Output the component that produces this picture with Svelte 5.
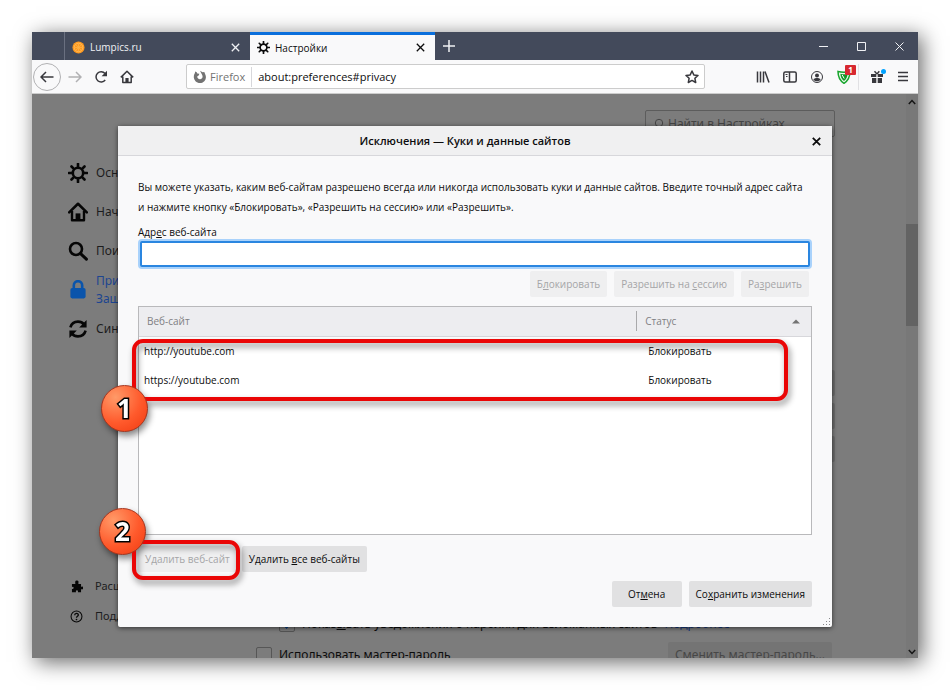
<script lang="ts">
  type Site = { url: string; status: string };

  let address = $state("");
  let sites = $state<Site[]>([
    { url: "http://youtube.com", status: "Блокировать" },
    { url: "https://youtube.com", status: "Блокировать" },
  ]);

  const categories = [
    { icon: "gear", label: "Основные" },
    { icon: "home", label: "Начало" },
    { icon: "search", label: "Поиск" },
    { icon: "lock", label: "Приватность и Защита", active: true },
    { icon: "sync", label: "Синхронизация" },
  ];
</script>

{#snippet icon(name: string)}
  <svg class="icon" viewBox="0 0 20 20" fill="none" stroke="currentColor" stroke-width="2" aria-hidden="true">
    {#if name === "gear"}
      <circle cx="10" cy="10" r="5.2" stroke-width="2.6" />
      <path
        d="M10 .8v3.4M10 15.8v3.4M.8 10h3.4M15.8 10h3.4M3.5 3.5l2.4 2.4M14.1 14.1l2.4 2.4M3.5 16.5l2.4-2.4M14.1 5.9l2.4-2.4"
        stroke-width="2.6"
        stroke-linecap="round"
      />
    {:else if name === "home"}
      <path d="M1.2 10.4L10 1.8l8.8 8.6" stroke-width="2.6" stroke-linecap="round" stroke-linejoin="round" />
      <path d="M4 9v9.2h12V9" stroke-width="2.4" stroke-linejoin="round" />
      <path d="M7.6 18v-6.6h4.8V18z" fill="currentColor" stroke="none" />
    {:else if name === "search"}
      <circle cx="8" cy="8" r="6" stroke-width="2.6" />
      <path d="M12.6 12.6l5.8 5.6" stroke-width="3" stroke-linecap="round" />
    {:else if name === "lock"}
      <rect x="2.4" y="8" width="15.2" height="10.4" rx="1.8" fill="currentColor" stroke="none" />
      <path d="M5.8 8.6V5.4a4.2 4.2 0 0 1 8.4 0v3.2" stroke-width="2.6" />
    {:else if name === "sync"}
      <path d="M2.4 8.4C3.4 4.6 6.4 2.6 10 2.6c2.6 0 4.6 1 6 2.8M17.6 11.6c-1 3.8-4 5.8-7.6 5.8-2.6 0-4.6-1-6-2.8" stroke-width="2.6" />
      <path d="M18.6 1v7.4h-7.4zM1.4 19v-7.4h7.4z" fill="currentColor" stroke="none" />
    {:else if name === "addon"}
      <path
        d="M8 2.5a2.6 2.6 0 0 1 5 1.5c-.3.9-.3 1.5.2 2H17v4c.6.7 1.4.2 1.8 0a1.8 1.8 0 0 1 0 4.4c-.7-.3-1.3-.6-1.8.2V19h-4.6c-.6-.7.2-1.5 0-2.2-.5-1.4-3-1.4-3.4 0-.2.7.6 1.5 0 2.2H3v-5c.5-.6 1.2-.1 2-.4 1-.5 1-2.5 0-3-.8-.3-1.5.3-2-.3V6h5c.6-.8-.4-2.4 0-3.5z"
        fill="currentColor"
        stroke="none"
      />
    {:else if name === "help"}
      <circle cx="10" cy="10" r="8.4" stroke-width="1.6" />
      <path d="M7.2 8c0-3.8 5.6-3.6 5.6-.4 0 2-2.8 2-2.8 4.2" />
      <circle cx="10" cy="14.6" r="1.3" fill="currentColor" stroke="none" />
    {/if}
  </svg>
{/snippet}

<div class="page">
  <div class="browser">
    <header class="tabs">
      <div class="tab">
        <svg class="tab-icon" viewBox="0 0 14 14">
          <circle cx="7" cy="7" r="6.5" fill="#ff9a1f" stroke="none" />
          <circle cx="7" cy="7" r="4.6" fill="none" stroke="#ffb95a" stroke-width="1" />
          <path d="M7 3v8M3 7h8M4.2 4.2l5.6 5.6M9.8 4.2l-5.6 5.6" stroke="#ffb347" stroke-width=".8" />
        </svg>
        <span class="tab-title">Lumpics.ru</span>
        <button class="tab-close" aria-label="Закрыть вкладку">
          <svg width="9" height="9" viewBox="0 0 9 9"><path d="M.8.8l7.4 7.4M8.2.8L.8 8.2" /></svg>
        </button>
      </div>
      <div class="tab active">
        <span class="tab-icon">{@render icon("gear")}</span>
        <span class="tab-title">Настройки</span>
        <button class="tab-close" aria-label="Закрыть вкладку">
          <svg width="9" height="9" viewBox="0 0 9 9"><path d="M.8.8l7.4 7.4M8.2.8L.8 8.2" /></svg>
        </button>
      </div>
      <button class="new-tab" aria-label="Новая вкладка">
        <svg width="12" height="12" viewBox="0 0 12 12"><path d="M6 0v12M0 6h12" /></svg>
      </button>
      <div class="window-controls">
        <button aria-label="Свернуть"><svg width="9" height="9" viewBox="0 0 9 9"><path d="M0 4.5h9" /></svg></button>
        <button aria-label="Развернуть"><svg width="9" height="9" viewBox="0 0 9 9"><path d="M.5.5h8v8h-8z" /></svg></button>
        <button aria-label="Закрыть"><svg width="9" height="9" viewBox="0 0 9 9"><path d="M.5.5l8 8M8.5.5l-8 8" /></svg></button>
      </div>
    </header>

    <nav class="toolbar">
      <button class="tool back" aria-label="Назад">
        <svg width="14" height="12" viewBox="0 0 14 12"><path d="M13.5 6H1M6 1L1 6l5 5" /></svg>
      </button>
      <button class="tool" aria-label="Вперёд" disabled>
        <svg width="14" height="12" viewBox="0 0 14 12"><path d="M.5 6H13M8 1l5 5-5 5" /></svg>
      </button>
      <button class="tool" aria-label="Обновить">
        <svg width="14" height="14" viewBox="0 0 14 14">
          <path d="M11.2 10A5.1 5.1 0 1 1 11 3.6" />
          <path d="M13 .8v5.4H7.6z" class="solid" />
        </svg>
      </button>
      <button class="tool" aria-label="Домой">
        <svg width="14" height="14" viewBox="0 0 14 14">
          <path d="M.8 7.4L7 1.3l6.2 6.1M2.8 6.6v6h8.4v-6" stroke-linejoin="round" />
          <path d="M5.4 12.6V8h3.2v4.6z" class="solid" />
        </svg>
      </button>

      <div class="urlbar">
        <svg width="14" height="14" viewBox="0 0 14 14">
          <path
            d="M7 .8l2.6 1.5 1.7-.2.8 1.9c1.4 2.6 1 5.3-.8 7.2-2.5 2.5-6.5 2.4-8.8 0C.4 9 .2 5.6 1.9 3l.3-1.6 1.5.9.6 1.2 2 .3-.4 1.4-1.7 1.2c.2 2.2 2 3.2 3.6 2.6 1.7-.6 2.2-2.2 1.5-3.8z"
            class="solid grey"
          />
        </svg>
        <span class="identity">Firefox</span>
        <input class="url" aria-label="Адрес" value="about:preferences#privacy" />
        <button class="star" aria-label="Добавить в закладки">
          <svg width="14" height="14" viewBox="0 0 14 14">
            <path d="M7 1l1.8 3.9 4.2.5-3.1 2.9.8 4.2L7 10.4l-3.7 2.1.8-4.2L1 5.4l4.2-.5z" stroke-linejoin="round" />
          </svg>
        </button>
      </div>

      <div class="tools">
        <button class="tool" aria-label="Библиотека">
          <svg width="14" height="14" viewBox="0 0 14 14"><path d="M1.5 1.5v11M4.5 1.5v11M7.5 1.5v11M9 1.5l4 11" /></svg>
        </button>
        <button class="tool" aria-label="Боковые панели">
          <svg width="14" height="14" viewBox="0 0 14 14">
            <rect x=".8" y="2" width="12.4" height="10" rx="1.5" />
            <path d="M6.5 2v10" />
            <path d="M2.5 4.5h2M3 6.5h1.5" stroke-width="1" />
          </svg>
        </button>
        <button class="tool" aria-label="Аккаунт">
          <svg class="thin" width="14" height="14" viewBox="0 0 14 14">
            <circle cx="7" cy="7" r="5.5" />
            <circle cx="7" cy="5.4" r="2" class="solid" />
            <path d="M3.4 9.4c1-2 6.2-2 7.2 0-1 2.4-6.2 2.4-7.2 0z" class="solid" />
          </svg>
        </button>
        <button class="tool" aria-label="Защита, 1 уведомление">
          <svg width="14" height="14" viewBox="0 0 14 14">
            <path d="M1 1.5c4 1 8 1 12 0 0 5-1.5 9-6 11.8C2.5 10.5 1 6.5 1 1.5z" fill="#e9f7ea" stroke="#17a52c" />
            <path d="M3.4 3.8c2.4.7 4.8.7 7.2 0 0 3-1.2 5.3-3.6 7.2-2.4-1.9-3.6-4.2-3.6-7.2z" fill="#129a28" stroke="none" />
            <path d="M5.2 5l2 3.5" stroke="#fff" stroke-width="1" />
          </svg>
          <span class="badge">1</span>
        </button>
        <button class="tool gift" aria-label="Что нового">
          <svg width="14" height="14" viewBox="0 0 14 14">
            <path d="M1 4h5.3v3H1zM7.7 4H13v3H7.7zM2 8h4.3v5H2zM7.7 8H12v5H7.7z" class="solid" />
            <path d="M7 4L4.5 1.3M7 4l2.3-2.7" />
          </svg>
          <span class="dot"></span>
        </button>
        <button class="tool" aria-label="Меню">
          <svg width="12" height="12" viewBox="0 0 12 12"><path d="M1 1.5h10M1 5.5h10M1 9.5h10" /></svg>
        </button>
      </div>
    </nav>

    <div class="content">
      <aside class="sidebar">
        {#each categories as c}
          <a class="category" class:selected={c.active} href="#{c.icon}">
            {@render icon(c.icon)}
            <span>{c.label}</span>
          </a>
        {/each}
        <div class="links">
          <a class="small-link" href="#addons">{@render icon("addon")}<span>Расширения и темы</span></a>
          <a class="small-link" href="#support">{@render icon("help")}<span>Поддержка Firefox</span></a>
        </div>
      </aside>

      <main class="prefs">
        <label class="find">
          <svg width="12" height="12" viewBox="0 0 12 12"><circle cx="7" cy="5" r="3.7" /><path d="M4.3 7.7L1 11" /></svg>
          <input placeholder="Найти в Настройках" />
        </label>
        <div class="side-buttons">
          <button>Исключения…</button>
          <button>Сохранённые логины…</button>
          <button>Управление данными…</button>
        </div>
        <div class="pref-rows">
          <div class="pref-row nested">
            <input id="breach" type="checkbox" checked />
            <label for="breach">Показ<u>ы</u>вать уведомления о паролях для взломанных сайтов</label>
            <a href="#more">Подробнее</a>
          </div>
          <div class="pref-row">
            <input id="master" type="checkbox" />
            <label for="master">Использовать мастер-пароль</label>
            <button disabled>Сменить мастер-пароль…</button>
          </div>
        </div>
      </main>

      <div class="scrollbar" aria-hidden="true">
        <svg width="8" height="6" viewBox="0 0 8 6"><path d="M.8 5L4 1.5 7.2 5" /></svg>
        <div class="track"><span class="thumb"></span></div>
        <svg width="8" height="6" viewBox="0 0 8 6"><path d="M.8 1L4 4.5 7.2 1" /></svg>
      </div>

      <div class="overlay">
        <div class="dialog" role="dialog" aria-labelledby="dialog-title">
          <div class="dialog-header">
            <h1 id="dialog-title">Исключения — Куки и данные сайтов</h1>
            <button class="dialog-close" aria-label="Закрыть">
              <svg width="9" height="9" viewBox="0 0 9 9"><path d="M.8.8l7.4 7.4M8.2.8L.8 8.2" /></svg>
            </button>
          </div>

          <div class="dialog-body">
            <p>
              Вы можете указать, каким веб-сайтам разрешено всегда или никогда использовать куки и данные сайтов. Введите
              точный адрес сайта и нажмите кнопку «Блокировать», «Разрешить на сессию» или «Разрешить».
            </p>
            <label class="address-label" for="address">Адр<u>е</u>с веб-сайта</label>
            <input id="address" class="address" bind:value={address} />
            <div class="actions">
              <button disabled={!address}>Б<u>л</u>окировать</button>
              <button disabled={!address}>Разрешить на <u>с</u>ессию</button>
              <button disabled={!address}>Ра<u>з</u>решить</button>
            </div>

            <div class="site-list">
              <table>
                <thead>
                  <tr>
                    <th class="site-col">Веб-сайт</th>
                    <th>
                      <div class="sorted">
                        Статус
                        <svg width="8" height="5" viewBox="0 0 8 5"><path d="M0 4.5L4 .5l4 4z" class="solid grey" /></svg>
                      </div>
                    </th>
                  </tr>
                </thead>
                <tbody>
                  {#each sites as site}
                    <tr><td>{site.url}</td><td>{site.status}</td></tr>
                  {/each}
                </tbody>
              </table>
              <div class="mark rows-mark"><span class="step">1</span></div>
            </div>

            <div class="remove">
              <div class="marked">
                <button disabled>У<u>д</u>алить веб-сайт</button>
                <div class="mark button-mark"><span class="step">2</span></div>
              </div>
              <button onclick={() => (sites = [])}>Удалить <u>в</u>се веб-сайты</button>
            </div>

            <div class="confirm">
              <button class="cancel">От<u>м</u>ена</button>
              <button>Со<u>х</u>ранить изменения</button>
            </div>
          </div>
          <svg class="grip" width="8" height="8" viewBox="0 0 8 8">
            <path d="M6 0h1v1H6zM6 3h1v1H6zM3 3h1v1H3zM6 6h1v1H6zM3 6h1v1H3zM0 6h1v1H0z" />
          </svg>
        </div>
      </div>
    </div>
  </div>
</div>

<style>
  :global(body) {
    background: #fff;
  }

  .page {
    display: flex;
    box-sizing: border-box;
    height: 100vh;
    padding: 32px;
    color: #0c0c0d;
    font: 11px/20px "Open Sans", "Noto Sans", sans-serif;
  }

  .page :global(*) {
    box-sizing: border-box;
  }

  button,
  input {
    margin: 0;
    padding: 0;
    border: none;
    background: none;
    color: inherit;
    font: inherit;
  }

  svg {
    flex-shrink: 0;
    fill: none;
    stroke: currentColor;
    stroke-width: 1.5;
  }

  .thin {
    stroke-width: 1;
  }

  .solid {
    fill: currentColor;
    stroke: none;
  }

  .grey {
    color: #737373;
  }

  .icon {
    width: 20px;
    height: 20px;
    stroke-width: 2;
  }

  .browser {
    display: flex;
    flex: 1;
    flex-direction: column;
    min-width: 0;
    box-shadow: 4px 4px 20px rgba(0, 0, 0, 0.6);
  }

  /* tab strip */
  .tabs {
    display: flex;
    height: 28px;
    padding-left: 32px;
    background: #434a5b;
    color: #f0f1f4;
    font-size: 10px;
  }

  .tab {
    display: flex;
    flex: 0 1 186px;
    align-items: center;
    gap: 5px;
    padding: 2px 10px 0 7px;
    border-left: 1px solid #6a7080;
  }

  .tab.active {
    flex-basis: 185px;
    padding-top: 0;
    border-top: 3px solid #0a6fdc;
    border-left: none;
    background: #f9f9fa;
    color: #0c0c0d;
  }

  .tab-icon {
    display: flex;
    width: 13px;
    height: 13px;
  }

  .tab-icon .icon {
    width: 13px;
    height: 13px;
  }

  .tab-title {
    flex: 1;
  }

  .tab-close {
    display: flex;
  }

  .tab-close svg {
    stroke-width: 1.3;
  }

  .new-tab {
    display: flex;
    align-items: center;
    padding: 0 8px;
  }

  .window-controls {
    display: flex;
    margin-left: auto;
  }

  .window-controls button {
    display: flex;
    align-items: center;
    justify-content: center;
    width: 38px;
  }

  .window-controls svg {
    stroke-width: 1;
  }

  /* toolbar */
  .toolbar {
    display: flex;
    align-items: center;
    height: 34px;
    border-bottom: 1px solid #ccc;
    background: #f9f9fa;
    color: #38383d;
  }

  .tool {
    position: relative;
    display: flex;
    align-items: center;
    justify-content: center;
    width: 26px;
    height: 26px;
  }

  .tool:disabled {
    color: #b1b1b3;
  }

  .back {
    width: 28px;
    height: 28px;
    margin: 0 1px;
    border: 1px solid #b1b1b3;
    border-radius: 50%;
  }

  .urlbar {
    display: flex;
    flex: 1;
    align-items: center;
    gap: 3px;
    height: 25px;
    margin: 0 45px 0 46px;
    padding: 0 5px 0 6px;
    border: 1px solid #ccc;
    border-radius: 2px;
    background: #fff;
  }

  .identity {
    padding-right: 6px;
    border-right: 1px solid #d7d7db;
    color: #737373;
  }

  .url {
    flex: 1;
    min-width: 0;
    padding-left: 3px;
    color: #0c0c0d;
  }

  .star {
    display: flex;
  }

  .tools {
    display: flex;
    gap: 1px;
    padding-right: 2px;
  }

  .badge {
    position: absolute;
    top: 1px;
    right: 1px;
    width: 11px;
    height: 10px;
    border-radius: 1px;
    background: #d7282f;
    color: #fff;
    font-size: 8px;
    font-weight: bold;
    line-height: 10px;
  }

  .gift {
    width: 31px;
    padding-left: 5px;
    border-left: 1px solid #e1e1e4;
  }

  .dot {
    position: absolute;
    top: 5px;
    right: 3px;
    width: 5px;
    height: 5px;
    border-radius: 50%;
    background: #00a2ff;
  }

  /* dimmed preferences page */
  .content {
    position: relative;
    display: flex;
    flex: 1;
    min-height: 0;
    overflow: hidden;
    background: #7c7c7c;
    font-family: "Noto Sans", sans-serif;
    font-size: 12px;
    line-height: 18px;
  }

  .sidebar {
    display: flex;
    flex: 0 0 224px;
    flex-direction: column;
    padding: 59px 40px 27px 36px;
  }

  .sidebar a {
    color: #1c1c1e;
    text-decoration: none;
  }

  .category {
    display: flex;
    align-items: center;
    gap: 8px;
    height: 39px;
  }

  .category .icon {
    color: #060606;
  }

  .sidebar .selected {
    color: #1d4590;
  }

  .selected .icon {
    color: #0a54ab;
  }

  .links {
    margin-top: auto;
  }

  .small-link {
    display: flex;
    align-items: center;
    gap: 12px;
    height: 30px;
    padding-left: 2px;
    font-size: 11px;
    white-space: nowrap;
  }

  .small-link .icon {
    width: 13px;
    height: 13px;
    color: #060606;
  }

  .prefs {
    flex: 0 1 579px;
    min-width: 0;
    padding-top: 16px;
  }

  .find {
    display: flex;
    align-items: center;
    gap: 4px;
    width: 190px;
    height: 27px;
    margin-left: auto;
    padding: 0 6px;
    border: 1px solid #5c5c5c;
    border-radius: 2px;
    color: #454545;
  }

  .find svg {
    stroke-width: 1;
  }

  .find input {
    flex: 1;
    min-width: 0;
  }

  .find input::placeholder {
    color: #454545;
  }

  .side-buttons {
    display: flex;
    flex-direction: column;
    gap: 7px;
    align-items: flex-end;
    margin-top: 233px;
  }

  .side-buttons button {
    width: 164px;
    height: 26px;
    border-radius: 2px;
    background: #6c6c6c;
  }

  .pref-rows {
    margin-top: 146px;
  }

  .pref-row {
    display: flex;
    align-items: center;
    gap: 7px;
    height: 31px;
    white-space: nowrap;
  }

  .pref-row.nested {
    padding-left: 23px;
  }

  .pref-row input {
    width: 16px;
    height: 16px;
    appearance: none;
    border: 1px solid #565656;
    border-radius: 2px;
    background: #7c7c7c;
  }

  .pref-row input:checked::before {
    display: block;
    width: 4px;
    height: 8px;
    margin: 1px 5px;
    border: solid #0a3f80;
    border-width: 0 2px 2px 0;
    content: "";
    transform: rotate(45deg);
  }

  .pref-row a {
    color: #173a80;
    text-decoration: none;
  }

  .pref-row button {
    height: 26px;
    margin-right: 3px;
    margin-left: auto;
    padding: 0 7px;
    border-radius: 2px;
    background: #747474;
    color: #474747;
  }

  .scrollbar {
    display: flex;
    flex: 0 0 12px;
    flex-direction: column;
    align-items: center;
    margin-left: auto;
    padding: 5px 0 3px;
    background: #787878;
    color: #151515;
  }

  .track {
    flex: 1;
    width: 100%;
    padding-top: 119px;
  }

  .thumb {
    display: block;
    height: 102px;
    background: #636363;
  }

  /* dialog */
  .overlay {
    position: absolute;
    inset: 0;
    display: flex;
    align-items: center;
    justify-content: center;
    font-family: "Open Sans", "Noto Sans", sans-serif;
    font-size: 10px;
    line-height: 20px;
  }

  .dialog {
    position: relative;
    width: 714px;
    max-width: 94%;
    border-radius: 2px;
    background: #f9f9fa;
    box-shadow: 0 1px 5px rgba(0, 0, 0, 0.6);
  }

  .dialog-header {
    display: flex;
    align-items: center;
    height: 30px;
    padding: 2px 11px 0 0;
    border-bottom: 1px solid #d7d7db;
    background: #f0f0f1;
  }

  h1 {
    flex: 1;
    margin: 0;
    font-size: 11px;
    font-weight: 600;
    text-align: center;
  }

  .dialog-close {
    display: flex;
  }

  .dialog-close svg {
    stroke-width: 1.8;
  }

  .dialog-body {
    padding: 21px 20px 20px;
  }

  p {
    margin: 0 0 6px;
    padding-right: 3px;
  }

  .address-label {
    display: block;
    line-height: 18px;
  }

  .address {
    display: block;
    width: calc(100% - 4px);
    height: 26px;
    margin: 0 2px;
    padding: 0 6px;
    border: 2px solid #2a86e0;
    border-radius: 2px;
    outline: none;
    background: #fff;
    box-shadow: 0 0 0 2px #a9d2fb;
  }

  .dialog-body button {
    height: 26px;
    padding: 0 7px;
    border-radius: 2px;
    background: #e1e1e2;
    white-space: nowrap;
  }

  .dialog-body button:disabled {
    background: #efeff0;
    color: #a5a5a7;
  }

  .actions {
    display: flex;
    gap: 7px;
    justify-content: flex-end;
    margin: 4px 3px 9px 0;
  }

  .site-list {
    position: relative;
    height: 229px;
    border: 1px solid #b9b9bb;
    background: #fff;
  }

  table {
    width: 100%;
    border-collapse: collapse;
    table-layout: fixed;
  }

  th {
    height: 30px;
    padding: 0 11px 0 8px;
    border-bottom: 1px solid #d7d7db;
    background: #ededf0;
    color: #808083;
    font-weight: normal;
    text-align: left;
  }

  .site-col {
    width: 74%;
  }

  .sorted {
    display: flex;
    align-items: center;
    justify-content: space-between;
    margin-left: -8px;
    padding-left: 8px;
    border-left: 1px solid #a9a9ab;
  }

  td {
    height: 29px;
    padding: 0 5px;
  }

  td + td {
    padding-left: 12px;
  }

  .remove {
    display: flex;
    gap: 5px;
    margin-top: 11px;
  }

  .marked {
    position: relative;
  }

  .confirm {
    display: flex;
    gap: 7px;
    justify-content: flex-end;
    margin-top: 9px;
  }

  .confirm .cancel {
    min-width: 70px;
  }

  .grip {
    position: absolute;
    right: 1px;
    bottom: 1px;
    fill: #88888a;
    stroke: none;
  }

  /* numbered callouts */
  .mark {
    position: absolute;
    border: 4px solid #ea0606;
    border-radius: 11px;
    filter: drop-shadow(2px 4px 3px rgba(0, 0, 0, 0.45));
    pointer-events: none;
  }

  .rows-mark {
    top: 32px;
    right: 23px;
    left: -7px;
    height: 62px;
  }

  .button-mark {
    inset: -6px -3px -8px -6px;
  }

  .step {
    position: absolute;
    display: flex;
    align-items: center;
    justify-content: center;
    width: 47px;
    height: 47px;
    border: 1px solid #a8341c;
    border-radius: 50%;
    background: radial-gradient(circle at 30% 25%, #ff9a68, #ff5a2c 55%, #f03a10);
    color: #fff;
    font-family: "Noto Sans", sans-serif;
    font-size: 26px;
    font-weight: bold;
    -webkit-text-stroke: 3px #000;
    paint-order: stroke fill;
  }

  .rows-mark .step {
    top: 42px;
    left: -35px;
  }

  .button-mark .step {
    top: -36px;
    left: -37px;
  }
</style>
